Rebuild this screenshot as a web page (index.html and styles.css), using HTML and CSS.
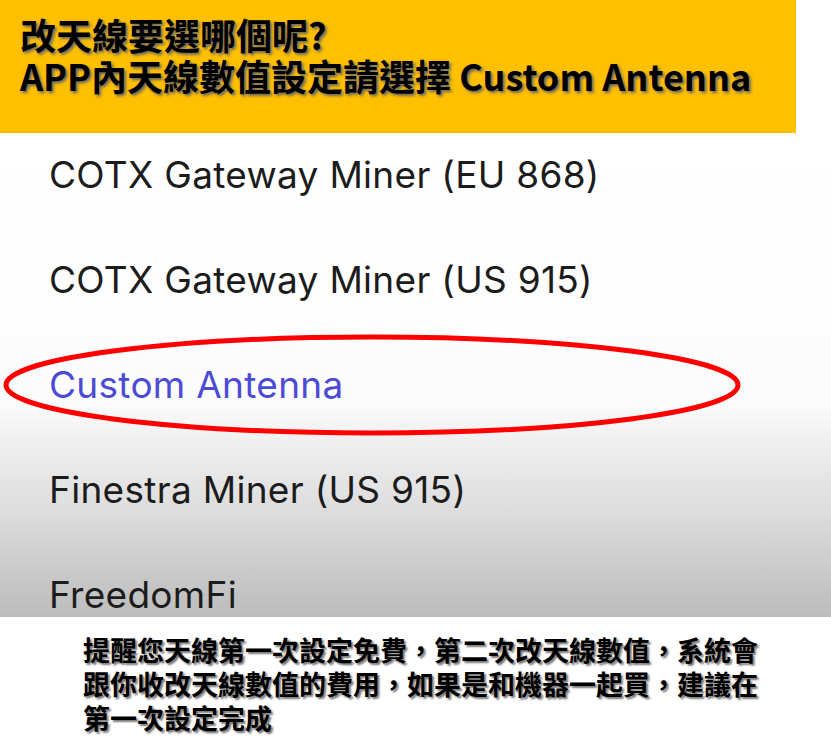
FILE: index.html
```html
<!DOCTYPE html>
<html lang="zh-Hant">
<head>
    <meta charset="UTF-8">
    <meta name="viewport" content="width=device-width, initial-scale=1.0">
    <title>Custom Antenna</title>
    <link rel="stylesheet" href="styles.css">
</head>
<body>
<div class="page">
    <div class="banner">
        <div class="line">改天線要選哪個呢?</div>
        <div class="line">APP內天線數值設定請選擇 Custom Antenna</div>
    </div>
    <div class="list">
        <div class="item">COTX Gateway Miner (EU 868)</div>
        <div class="item">COTX Gateway Miner (US 915)</div>
        <div class="item selected">Custom Antenna</div>
        <div class="item">Finestra Miner (US 915)</div>
        <div class="item">FreedomFi</div>
        <svg class="circle" width="831" height="484" viewBox="0 0 831 484">
            <ellipse cx="372" cy="252" rx="366" ry="48" fill="none" stroke="#ff0000" stroke-width="5"/>
        </svg>
    </div>
    <div class="note">
        提醒您天線第一次設定免費，第二次改天線數值，系統會<br>
        跟你收改天線數值的費用，如果是和機器一起買，建議在<br>
        第一次設定完成
    </div>
</div>
</body>
</html>
```

FILE: styles.css
```css
body {
    margin: 0;
    background: #fff;
    font-family: Inter, "Noto Sans", sans-serif;
}
.page {
    width: 831px;
    height: 740px;
    overflow: hidden;
}
.banner {
    width: 796px;
    height: 133px;
    box-sizing: border-box;
    padding: 14px 0 0 20px;
    background-color: #ffc000;
    color: #000;
    font-family: "Noto Sans CJK TC", "Noto Sans", sans-serif;
    font-size: 36px;
    font-weight: bold;
    text-shadow: 2px 2px 3px #666;
}
.banner .line {
    height: 41px;
    line-height: 41px;
}
.list {
    position: relative;
    height: 484px;
    overflow: hidden;
    background: linear-gradient(to bottom, #fff 0, #fcfcfc 268px, #f2f2f2 300px, #dcdcdc 380px, #bcbcbc 484px);
}
.item {
    height: 105px;
    box-sizing: border-box;
    padding: 20px 0 0 49px;
    font-size: 37px;
    line-height: 44px;
    letter-spacing: 0.3px;
    color: #1c1c1c;
}
.item.selected {
    color: #4b4bd6;
}
.circle {
    position: absolute;
    left: 0;
    top: 0;
}
.note {
    padding: 16px 0 0 83px;
    font-family: "Noto Sans CJK TC", sans-serif;
    font-size: 27px;
    font-weight: bold;
    line-height: 34px;
    color: #000;
    text-shadow: 2px 2px 2px #777;
}
```
